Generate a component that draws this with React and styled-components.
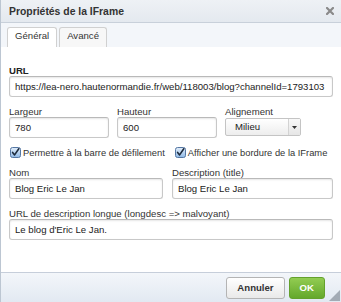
import React from "react";
import styled, { createGlobalStyle } from "styled-components";

const Global = createGlobalStyle`
  html, body { margin: 0; padding: 0; background: #fff; }
  body {
    font-family: "Liberation Sans", Arial, Helvetica, sans-serif;
    font-size: 9.6px;
    color: #2b2b2b;
  }
  * { box-sizing: border-box; }
`;

const Dialog = styled.div`
  width: 341px;
  height: 302px;
  display: flex;
  flex-direction: column;
  border-left: 1px solid #bcc6d2;
  background: #fff;
  overflow: hidden;
`;

const TitleBar = styled.div`
  height: 23px;
  flex: none;
  display: flex;
  align-items: center;
  justify-content: space-between;
  padding: 0 7px 0 8px;
  border-bottom: 1px solid #c8d0da;
  background: linear-gradient(to bottom, #eef1f5, #e4e9ef);
`;

const Title = styled.div`
  font-size: 10.4px;
  font-weight: bold;
  color: #333;
`;

const Close = styled.svg`
  width: 8px;
  height: 8px;
  display: block;
`;

const TabStrip = styled.div`
  height: 24px;
  flex: none;
  display: flex;
  align-items: flex-end;
  gap: 2px;
  padding-left: 6px;
  background: #f3f6fa;
`;

const Tab = styled.div`
  height: 20px;
  padding: 0 7px;
  line-height: 16px;
  border: 1px solid #d0d0d0;
  border-bottom: none;
  border-radius: 3px 3px 0 0;
  background: ${(p) => (p.$active ? "#fff" : "#f7f7f7")};
  color: #333;
`;

const Content = styled.div`
  flex: 1;
  display: flex;
  flex-direction: column;
  gap: 9px;
  padding: 18px 8px 0 8px;
  background: #fff;
`;

const Field = styled.div`
  display: flex;
  flex-direction: column;
  min-width: 0;
`;

const Label = styled.div`
  line-height: 11px;
  height: 11px;
  font-weight: ${(p) => (p.$bold ? "bold" : "normal")};
  color: ${(p) => (p.$bold ? "#222" : "#333")};
  white-space: nowrap;
`;

const Input = styled.input`
  display: block;
  width: 100%;
  height: 21px;
  margin: 0;
  padding: 0 5px;
  border: 1px solid #c8c8c8;
  border-top-color: #b9b9b9;
  border-radius: 3px;
  background: #fff;
  box-shadow: inset 0 1px 2px rgba(0, 0, 0, 0.1);
  font: inherit;
  color: #222;
  outline: none;
`;

const Row = styled.div`
  display: grid;
  grid-template-columns: ${(p) => p.$cols};
  column-gap: ${(p) => p.$gap || "8px"};
`;

const Select = styled.div`
  margin-top: 1px;
  height: 18px;
  display: flex;
  border: 1px solid #c4c4c4;
  border-radius: 2px;
  background: linear-gradient(to bottom, #ffffff, #ededed);
  color: #222;
`;

const SelectValue = styled.div`
  flex: 1;
  padding-left: 9px;
  line-height: 16px;
`;

const SelectArrow = styled.div`
  width: 12px;
  display: flex;
  align-items: center;
  justify-content: center;
  border-left: 1px solid #d3d3d3;
  background: linear-gradient(to bottom, #f8f8f8, #e6e6e6);
`;

const CheckRow = styled.div`
  height: 11px;
  display: flex;
  align-items: center;
  gap: 10px;
  padding-left: 1px;
  font-size: 9.35px;
`;

const CheckItem = styled.div`
  display: flex;
  align-items: center;
  gap: 2px;
  color: #333;
  white-space: nowrap;
`;

const Footer = styled.div`
  position: relative;
  height: 30px;
  flex: none;
  display: flex;
  justify-content: flex-end;
  align-items: flex-start;
  gap: 4px;
  padding: 4px 16px 0 0;
  border-top: 1px solid #c6ceda;
  background: linear-gradient(to bottom, #f3f6fa, #e2e9f2);
`;

const Button = styled.div`
  height: 22px;
  padding: 0 10px;
  line-height: 20px;
  border-radius: 3px;
  font-weight: bold;
  border: 1px solid ${(p) => (p.$primary ? "#64a12c" : "#b4b4b4")};
  background: ${(p) =>
    p.$primary
      ? "linear-gradient(to bottom, #92cc52, #64a82b)"
      : "linear-gradient(to bottom, #ffffff, #e9e9e9)"};
  color: ${(p) => (p.$primary ? "#fff" : "#333")};
`;

const Grip = styled.svg`
  position: absolute;
  right: 1px;
  bottom: 1px;
  width: 11px;
  height: 11px;
`;

function Checkbox() {
  return (
    <svg width="11" height="11" viewBox="0 0 11 11" style={{ display: "block", flex: "none" }}>
      <defs>
        <linearGradient id="cbg" x1="0" y1="0" x2="0" y2="1">
          <stop offset="0" stopColor="#e3eefa" />
          <stop offset="1" stopColor="#8fb9e6" />
        </linearGradient>
      </defs>
      <rect x="0.5" y="0.5" width="10" height="10" rx="2" fill="url(#cbg)" stroke="#5577a3" />
      <path d="M2.6 5.4 L4.6 7.9 L8.8 1.8" fill="none" stroke="#1d2b3d" strokeWidth="1.6" strokeLinecap="round" strokeLinejoin="round" />
    </svg>
  );
}

export default function App() {
  return (
    <>
      <Global />
      <Dialog>
        <TitleBar>
          <Title>Propriétés de la IFrame</Title>
          <Close viewBox="0 0 8 8">
            <path d="M1 1 L7 7 M7 1 L1 7" stroke="#8a8a8a" strokeWidth="2.2" strokeLinecap="square" />
          </Close>
        </TitleBar>
        <TabStrip>
          <Tab $active>Général</Tab>
          <Tab>Avancé</Tab>
        </TabStrip>
        <Content>
          <Field>
            <Label $bold>URL</Label>
            <Input readOnly value="https://lea-nero.hautenormandie.fr/web/118003/blog?channelId=1793103" />
          </Field>
          <Row $cols="100px 100px 76px">
            <Field>
              <Label>Largeur</Label>
              <Input readOnly value="780" />
            </Field>
            <Field>
              <Label>Hauteur</Label>
              <Input readOnly value="600" />
            </Field>
            <Field>
              <Label>Alignement</Label>
              <Select>
                <SelectValue>Milieu</SelectValue>
                <SelectArrow>
                  <svg width="5" height="3" viewBox="0 0 5 3">
                    <path d="M0 0 H5 L2.5 3 Z" fill="#333" />
                  </svg>
                </SelectArrow>
              </Select>
            </Field>
          </Row>
          <CheckRow>
            <CheckItem>
              <Checkbox />
              Permettre à la barre de défilement
            </CheckItem>
            <CheckItem>
              <Checkbox />
              Afficher une bordure de la IFrame
            </CheckItem>
          </CheckRow>
          <Row $cols="154px 1fr" $gap="9px">
            <Field>
              <Label>Nom</Label>
              <Input readOnly value="Blog Eric Le Jan" />
            </Field>
            <Field>
              <Label>Description (title)</Label>
              <Input readOnly value="Blog Eric Le Jan" />
            </Field>
          </Row>
          <Field>
            <Label>URL de description longue (longdesc =&gt; malvoyant)</Label>
            <Input readOnly value="Le blog d'Eric Le Jan." />
          </Field>
        </Content>
        <Footer>
          <Button>Annuler</Button>
          <Button $primary>OK</Button>
          <Grip viewBox="0 0 11 11">
            <path d="M11 0 L11 11 L0 11 Z" fill="#a3abb5" />
          </Grip>
        </Footer>
      </Dialog>
    </>
  );
}
